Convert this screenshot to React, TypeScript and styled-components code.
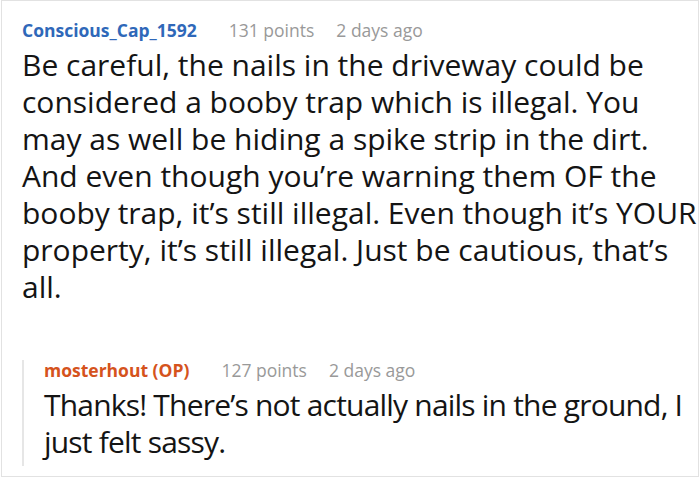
import React, { FC } from "react";
import styled, { createGlobalStyle } from "styled-components";

const GlobalStyle = createGlobalStyle`
  html, body {
    margin: 0;
    padding: 0;
    background: #fff;
  }
  body {
    font-family: "Open Sans", "Noto Sans", "Liberation Sans", sans-serif;
  }
`;

interface CommentData {
  author: string;
  isOp?: boolean;
  points: number;
  age: string;
  text: string;
}

const Frame = styled.div`
  width: 698px;
  height: 477px;
  margin-left: 1px;
  border: 1px solid #e2e2e2;
  box-sizing: border-box;
  padding: 19px 0 0 20px;
  overflow: hidden;
`;

const Comment = styled.div`
  display: flex;
  flex-direction: column;
`;

const Replies = styled.div`
  margin-top: 55px;
  border-left: 2px solid #e6e6e6;
  padding-left: 20px;
  padding-bottom: 6px;
`;

const Meta = styled.div`
  display: flex;
  align-items: baseline;
  font-size: 17.5px;
  line-height: 20px;
`;

const Author = styled.span<{ $op?: boolean }>`
  font-weight: 700;
  color: ${(p) => (p.$op ? "#d5531d" : "#2f68b9")};
  margin-right: 32px;
`;

const Info = styled.span`
  color: #999;
  margin-right: 22px;
`;

const Body = styled.p<{ $tight?: boolean }>`
  margin: 6px 0 0;
  font-size: 30px;
  line-height: 37px;
  color: #141414;
  letter-spacing: ${(p) => (p.$tight ? "-0.8px" : "0")};
`;

const CommentBlock: FC<{ c: CommentData }> = ({ c }) => (
  <Comment>
    <Meta>
      <Author $op={c.isOp}>
        {c.author}
        {c.isOp ? " (OP)" : ""}
      </Author>
      <Info>{c.points} points</Info>
      <Info>{c.age}</Info>
    </Meta>
    <Body $tight={c.isOp}>{c.text}</Body>
  </Comment>
);

const parent: CommentData = {
  author: "Conscious_Cap_1592",
  points: 131,
  age: "2 days ago",
  text:
    "Be careful, the nails in the driveway could be considered a booby trap which is illegal. You may as well be hiding a spike strip in the dirt. And even though you\u2019re warning them OF the booby trap, it\u2019s still illegal. Even though it\u2019s YOUR property, it\u2019s still illegal. Just be cautious, that\u2019s all.",
};

const reply: CommentData = {
  author: "mosterhout",
  isOp: true,
  points: 127,
  age: "2 days ago",
  text: "Thanks! There\u2019s not actually nails in the ground, I just felt sassy.",
};

const App: FC = () => (
  <>
    <GlobalStyle />
    <Frame>
      <CommentBlock c={parent} />
      <Replies>
        <CommentBlock c={reply} />
      </Replies>
    </Frame>
  </>
);

export default App;
